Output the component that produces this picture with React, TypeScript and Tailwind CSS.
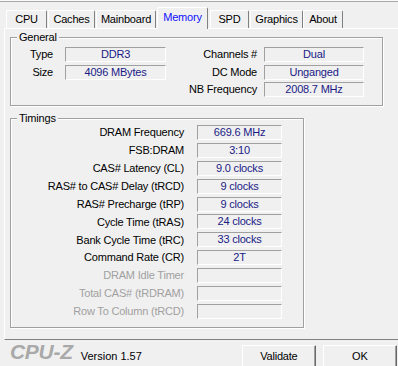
import { ReactNode } from 'react';

const tabs = [
  { id: 'cpu', label: 'CPU', w: 'w-[41px] ml-[6px]' },
  { id: 'caches', label: 'Caches', w: 'w-[47px] ml-[1px]' },
  { id: 'mainboard', label: 'Mainboard', w: 'w-[60px] ml-[1px]' },
  { id: 'memory', label: 'Memory', w: 'w-[51px] ml-[1px]' },
  { id: 'spd', label: 'SPD', w: 'w-[39px] ml-[2px]' },
  { id: 'graphics', label: 'Graphics', w: 'w-[53px] ml-[1px]' },
  { id: 'about', label: 'About', w: 'w-[40px] ml-0' },
];

const timings = [
  { label: 'DRAM Frequency', value: '669.6 MHz' },
  { label: 'FSB:DRAM', value: '3:10' },
  { label: 'CAS# Latency (CL)', value: '9.0 clocks' },
  { label: 'RAS# to CAS# Delay (tRCD)', value: '9 clocks' },
  { label: 'RAS# Precharge (tRP)', value: '9 clocks' },
  { label: 'Cycle Time (tRAS)', value: '24 clocks' },
  { label: 'Bank Cycle Time (tRC)', value: '33 clocks' },
  { label: 'Command Rate (CR)', value: '2T' },
  { label: 'DRAM Idle Timer', value: '', disabled: true },
  { label: 'Total CAS# (tRDRAM)', value: '', disabled: true },
  { label: 'Row To Column (tRCD)', value: '', disabled: true },
];

const GroupBox = ({ title, className, children }: { title: string; className: string; children: ReactNode }) => (
  <div className={`relative border border-[#a0a0a0] shadow-[inset_1px_1px_0_#fff,1px_1px_0_#fff] ${className}`}>
    <span className="absolute left-[6px] -top-[7px] px-[2px] bg-[#f0f0f0] leading-[13px]">{title}</span>
    {children}
  </div>
);

const Field = ({
  label,
  value,
  labelW,
  boxW,
  gap,
  disabled,
}: {
  label: string;
  value: string;
  labelW: string;
  boxW: string;
  gap: string;
  disabled?: boolean;
}) => (
  <div className={`flex items-center h-[15px] ${gap}`}>
    <span className={`${labelW} text-right whitespace-nowrap ${disabled ? 'text-[#a0a0a0]' : 'text-black'}`}>{label}</span>
    <div
      className={`${boxW} h-[15px] flex items-center justify-center border border-t-[#a0a0a0] border-l-[#a0a0a0] border-b-white border-r-white text-[#1a1a86] leading-none`}
    >
      {value}
    </div>
  </div>
);

export default function App() {
  return (
    <div className="w-[398px] h-[366px] overflow-hidden bg-[#f0f0f0] font-['Liberation_Sans',Arial,sans-serif] text-[11px] tracking-[-0.2px] text-black select-none">
      <div className="h-[1px] bg-[#fafafa]" />
      <div className="h-[1px] bg-[#a8a8a8]" />

      {/* tabs */}
      <div className="flex items-end h-[26px]">
        {tabs.map((t) => {
          const active = t.id === 'memory';
          return (
            <div
              key={t.id}
              className={`${t.w} relative flex items-center justify-center border-l border-t border-r border-l-white border-t-white border-r-[#808080] rounded-t-[2px] ${
                active ? 'h-[22px] -mb-px z-10 bg-[#f0f0f0] text-[#1010ff] pb-[2px]' : 'h-[18px] text-black'
              }`}
            >
              {t.label}
            </div>
          );
        })}
      </div>

      {/* tab panel */}
      <div className="ml-[4px] w-[400px] h-[312px] border-t border-l border-b border-t-white border-l-white border-b-[#808080] pt-[8px] pl-[5px]">
        <GroupBox title="General" className="w-[373px] h-[69px] pt-[9px]">
          <div className="flex">
            <div className="flex flex-col gap-[2.5px]">
              <Field label="Type" value="DDR3" labelW="w-[42px]" boxW="w-[101px]" gap="gap-[12px]" />
              <Field label="Size" value="4096 MBytes" labelW="w-[42px]" boxW="w-[101px]" gap="gap-[12px]" />
            </div>
            <div className="flex flex-col gap-[2.5px]">
              <Field label="Channels #" value="Dual" labelW="w-[91px]" boxW="w-[100px]" gap="gap-[7px]" />
              <Field label="DC Mode" value="Unganged" labelW="w-[91px]" boxW="w-[100px]" gap="gap-[7px]" />
              <Field label="NB Frequency" value="2008.7 MHz" labelW="w-[91px]" boxW="w-[100px]" gap="gap-[7px]" />
            </div>
          </div>
        </GroupBox>

        <GroupBox title="Timings" className="mt-[12px] w-[294px] h-[210px] pt-[6px]">
          <div className="flex flex-col gap-[2.9px]">
            {timings.map((r) => (
              <Field
                key={r.label}
                label={r.label}
                value={r.value}
                disabled={r.disabled}
                labelW="w-[173px]"
                boxW="w-[85px]"
                gap="gap-[13px]"
              />
            ))}
          </div>
        </GroupBox>
      </div>

      {/* footer */}
      <div className="flex items-start h-[27px]">
        <span className="ml-[10px] mt-[1px] font-bold italic text-[21px] leading-[22px] text-[#a9a9a9] tracking-[-0.3px]">CPU-Z</span>
        <span className="ml-[8px] mt-[10px] leading-[13px] tracking-normal">Version 1.57</span>
        <button className="ml-[100px] mt-[5px] w-[74px] h-[23px] border border-t-white border-l-white border-r-[#696969] border-b-[#696969] shadow-[inset_-1px_-1px_0_#a0a0a0] bg-[#f0f0f0] leading-none">
          Validate
        </button>
        <button className="ml-[7px] mt-[5px] w-[74px] h-[23px] shrink-0 border border-t-white border-l-white border-r-[#696969] border-b-[#696969] shadow-[inset_-1px_-1px_0_#a0a0a0] bg-[#f0f0f0] leading-none">
          OK
        </button>
      </div>
    </div>
  );
}
